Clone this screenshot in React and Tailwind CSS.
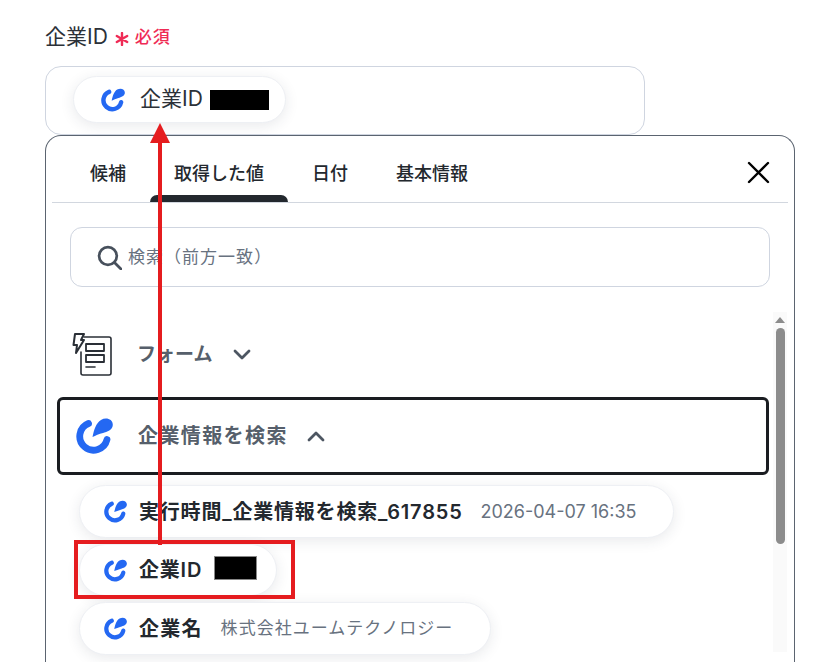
const jp = "font-['Inter','Noto_Sans_CJK_JP',sans-serif]";

function Logo({ className }) {
  return (
    <svg viewBox="0 0 37 36" className={className} fill="none">
      <path d="M12.5 5.5A13.8 13.8 0 1 0 31 21.5" stroke="#2468f2" strokeWidth="6.8" strokeLinecap="round" />
      <path d="M16.5 19C18 12 20 5 25 2C30 -1 37 1 36.8 7C36.6 12 31 14 27 15C23 16 19.5 17.5 16.5 19Z" fill="#2468f2" />
    </svg>
  );
}

function FormIcon() {
  return (
    <svg viewBox="0 0 40 44" className="w-[40px] h-[44px]" fill="none" stroke="#2a2f36" strokeWidth="1.6" strokeLinejoin="round" strokeLinecap="round">
      <path d="M12 4H37C38.2 4 39 4.8 39 6V40C39 41.2 38.2 42 37 42H11C9.8 42 9 41.2 9 40V19" />
      <path d="M3 1H12L9 7H12L4 20L5 12H1.5Z" strokeWidth="2" />
      <rect x="14" y="11" width="18" height="7" strokeWidth="1.8" />
      <rect x="14" y="22" width="18" height="7" strokeWidth="1.8" />
      <path d="M14 34H23" />
    </svg>
  );
}

function Chevron({ up }) {
  return (
    <svg viewBox="0 0 18 12" className="w-[18px] h-[12px]" fill="none" stroke="#4d5662" strokeWidth="2.8" strokeLinecap="round" strokeLinejoin="round">
      <path d={up ? "M2 10L9 3L16 10" : "M2 2L9 9L16 2"} />
    </svg>
  );
}

function Pill({ className, children }) {
  return (
    <div className={`flex items-center rounded-full bg-white border border-[#eef0f4] shadow-[0_3px_14px_rgba(40,50,70,0.1)] ${className}`}>
      {children}
    </div>
  );
}

function Tab({ label, active }) {
  return (
    <div className="relative px-[24px] h-[66px] flex items-center pt-[9px] text-[18px] font-medium text-[#23282e]">
      {label}
      {active && <div className="absolute left-0 right-0 bottom-0 h-[7px] bg-[#23282e] rounded-t-lg" />}
    </div>
  );
}

export default function App() {
  return (
    <div className={`relative w-[835px] h-[662px] overflow-hidden bg-white ${jp}`}>
      <div className="pl-[45px] pt-[21px] w-[795px]">
        <div className="flex items-center h-[30px] text-[21px] text-[#2c3138]">
          <span className="mt-[1px]">企業ID</span>
          <svg viewBox="0 0 14 14" className="ml-[7px] mt-[5px] w-[14px] h-[14px]" fill="none" stroke="#ef2b55" strokeWidth="2.4" strokeLinecap="round">
            <path d="M7 1V13M1.8 4L12.2 10M12.2 4L1.8 10" />
          </svg>
          <span className="ml-[6px] mt-[3px] text-[17px] font-medium tracking-[0.05em] text-[#ef2b55]">必須</span>
        </div>

        <div className="mt-[15px] w-[600px] h-[69px] rounded-2xl border border-[#cfd5e0] pl-[27px] pt-[9px]">
          <Pill className="w-[213px] h-[47px] pl-[27px]">
            <Logo className="w-[24px] h-[24px]" />
            <span className="ml-[15px] mb-[2px] text-[21px] text-[#2c3138]">企業ID</span>
            <span className="ml-[7px] w-[59px] h-[20px] bg-black" />
          </Pill>
        </div>

        <div className="w-[750px] h-[600px] rounded-t-2xl border border-[#5b6470] border-b-0 px-[6px]">
          <div className="relative flex pl-[14px] border-b border-[#d2d7df]">
            <Tab label="候補" />
            <Tab label="取得した値" active />
            <Tab label="日付" />
            <Tab label="基本情報" />
            <svg viewBox="0 0 24 24" className="absolute right-[18px] top-[24px] w-[24px] h-[24px]" fill="none" stroke="#000" strokeWidth="2.4" strokeLinecap="round">
              <path d="M3 3L22 22M22 3L3 22" />
            </svg>
          </div>

          <div className="ml-[18px] mt-[24px] w-[700px] h-[60px] rounded-xl border border-[#cfd5e0] flex items-center pl-[26px]">
            <svg viewBox="0 0 24 24" className="w-[25px] h-[25px]" fill="none" stroke="#47505c" strokeWidth="2.6" strokeLinecap="round">
              <circle cx="10.5" cy="10.5" r="8.5" />
              <path d="M17 17L23 23" />
            </svg>
            <span className="ml-[6px] mt-[2px] text-[17px] tracking-[0.06em] text-[#68727f]">検索（前方一致）</span>
          </div>

          <div className="flex mt-[25px]">
            <div className="w-[721px]">
              <div className="flex items-center pl-[20px] pt-[20px] h-[65px]">
                <FormIcon />
                <span className="ml-[25px] mt-[1px] text-[19px] font-semibold text-[#565f6b]">フォーム</span>
                <span className="ml-[21px]"><Chevron /></span>
              </div>
              <div className="ml-[5px] mt-[20px] w-[712px] h-[78px] rounded-[6px] border-[3px] border-[#1a1d21] flex items-center pl-[16px]">
                <Logo className="w-[37px] h-[36px]" />
                <span className="ml-[25px] text-[20px] tracking-[0.07em] font-semibold text-[#565f6b]">企業情報を検索</span>
                <span className="ml-[19px]"><Chevron up /></span>
              </div>
              <div className="ml-[27px] mt-[10px] flex flex-col gap-[6px] items-start">
                <Pill className="w-[595px] h-[53px] pl-[24px]">
                  <Logo className="w-[23px] h-[23px]" />
                  <span className="ml-[12px] text-[20px] tracking-[0.04em] font-semibold text-[#23282e]">実行時間_企業情報を検索_617855</span>
                  <span className="ml-[18px] text-[18px] text-[#68727f]">2026-04-07 16:35</span>
                </Pill>
                <Pill className="w-[198px] h-[52px] pl-[24px]">
                  <Logo className="w-[23px] h-[23px]" />
                  <span className="ml-[12px] text-[20px] tracking-[0.04em] font-semibold text-[#23282e]">企業ID</span>
                  <span className="ml-[12px] mb-[5px] w-[43px] h-[24px] bg-black border border-[#888]" />
                </Pill>
                <Pill className="w-[412px] h-[53px] pl-[24px]">
                  <Logo className="w-[23px] h-[23px]" />
                  <span className="ml-[12px] text-[20px] tracking-[0.06em] font-semibold text-[#23282e]">企業名</span>
                  <span className="ml-[18px] text-[17px] tracking-[0.06em] text-[#68727f]">株式会社ユームテクノロジー</span>
                </Pill>
              </div>
            </div>
            <div className="w-[14px] bg-[#fafafa] flex flex-col items-center h-[340px]">
              <div className="mt-[5px] w-0 h-0 border-x-[5px] border-x-transparent border-b-[6px] border-b-[#8c8c8c]" />
              <div className="mt-[5px] w-[9px] h-[216px] rounded-full bg-[#8c8c8c]" />
            </div>
          </div>
        </div>
      </div>

      {/* 赤い注釈 */}
      <div className="absolute left-[74px] top-[540px] w-[221px] h-[59px] border-4 border-[#e51c1f]" />
      <div className="absolute left-[158px] top-[140px] w-[4px] h-[405px] bg-[#e51c1f]" />
      <div className="absolute left-[150px] top-[123px] w-0 h-0 border-x-[10px] border-x-transparent border-b-[20px] border-b-[#e51c1f]" />
    </div>
  );
}
